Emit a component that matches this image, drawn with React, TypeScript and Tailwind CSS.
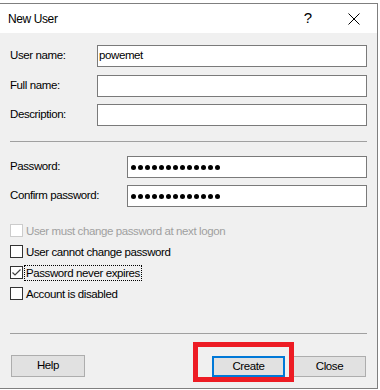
import { useState } from "react";

const font = { fontFamily: "'Liberation Sans', Arial, sans-serif" };
const txt = "text-[11.5px] tracking-[-0.4px]";

function Field({ label, value }: { label: string; value?: string }) {
  return (
    <div className="flex items-center h-[22px]">
      <label className={`w-[87px] shrink-0 ${txt} text-black`}>{label}</label>
      <div className={`flex-1 h-[22px] bg-white border border-[#7a7a7a] flex items-center px-[1px] ${txt} text-black`}>
        {value}
      </div>
    </div>
  );
}

function PasswordField({ label }: { label: string }) {
  return (
    <div className="flex items-center h-[22px]">
      <label className={`w-[117px] shrink-0 ${txt} text-black`}>{label}</label>
      <div className="flex-1 h-[22px] bg-white border border-[#7a7a7a] flex items-center gap-[2px] pl-[3px]">
        {Array.from({ length: 13 }).map((_, i) => (
          <span key={i} className="w-[5px] h-[5px] rounded-full bg-black" />
        ))}
      </div>
    </div>
  );
}

function Check({
  label,
  checked,
  disabled,
  focused,
}: {
  label: string;
  checked?: boolean;
  disabled?: boolean;
  focused?: boolean;
}) {
  return (
    <div className="flex items-center h-[13px] gap-[3px]">
      <span
        className={`w-[13px] h-[13px] shrink-0 bg-white border flex items-center justify-center ${
          disabled ? "border-[#cccccc]" : "border-[#333333]"
        }`}
      >
        {checked && (
          <svg width="11" height="11" viewBox="0 0 11 11">
            <polyline points="1.5,5.5 4,8 9.5,2.5" fill="none" stroke="#404040" strokeWidth="1.2" />
          </svg>
        )}
      </span>
      <span
        className={`${txt} leading-[14px] ${disabled ? "text-[#a0a0a0]" : "text-black"} ${
          focused ? "outline outline-1 outline-dotted outline-black px-[1px] -ml-[1px]" : ""
        }`}
      >
        {label}
      </span>
    </div>
  );
}

export default function App() {
  const [, setClosed] = useState(false);

  return (
    <div className="w-[380px] h-[390px] bg-white pt-[3px]" style={font}>
      <div className="w-[378px] h-[386px] border-t border-r border-b border-[#7f7f7f] flex flex-col">
        <div className="h-[29px] bg-white flex items-center pl-[8px] pr-[17px] shrink-0">
          <span className="text-[12px] tracking-[-0.4px] text-black flex-1">New User</span>
          <span className="text-[15px] text-black mr-[36px]">?</span>
          <button onClick={() => setClosed(true)} className="w-[12px] h-[12px]">
            <svg width="12" height="12" viewBox="0 0 12 12">
              <path d="M0.5 0.5 L11.5 11.5 M11.5 0.5 L0.5 11.5" stroke="#000" strokeWidth="1" />
            </svg>
          </button>
        </div>

        <div className="flex-1 bg-[#f0f0f0] pl-[10px] pr-[10px] pt-[12px] relative">
          <div className="flex flex-col gap-[8px]">
            <Field label="User name:" value="powemet" />
            <Field label="Full name:" />
            <div className="-mt-[1px]">
              <Field label="Description:" />
            </div>
          </div>

          <div className="mt-[15px] h-[1px] bg-[#a0a0a0]" />

          <div className="mt-[14px] flex flex-col gap-[7px]">
            <PasswordField label="Password:" />
            <PasswordField label="Confirm password:" />
          </div>

          <div className="mt-[17px] flex flex-col gap-[8px]">
            <Check label="User must change password at next logon" disabled />
            <Check label="User cannot change password" />
            <Check label="Password never expires" checked focused />
            <Check label="Account is disabled" />
          </div>

          <div className="mt-[33px] h-[1px] bg-[#a0a0a0]" />

          <div className="mt-[21px] flex items-start pr-[1px]">
            <button className={`ml-[1px] w-[74px] h-[22px] bg-[#e1e1e1] border border-[#adadad] ${txt} text-black`}>
              Help
            </button>
            <div className="flex-1" />
            <button className={`w-[73px] h-[21px] mt-[1px] bg-[#e1e1e1] border-2 border-[#0078d7] ${txt} text-black`}>
              Create
            </button>
            <button className={`ml-[8px] w-[73px] h-[21px] mt-[1px] bg-[#e1e1e1] border border-[#adadad] ${txt} text-black`}>
              Close
            </button>
          </div>

          <div className="absolute left-[193px] top-[309px] w-[101px] h-[40px] border-[5px] border-[#ed1c24] pointer-events-none" />
        </div>
      </div>
    </div>
  );
}
